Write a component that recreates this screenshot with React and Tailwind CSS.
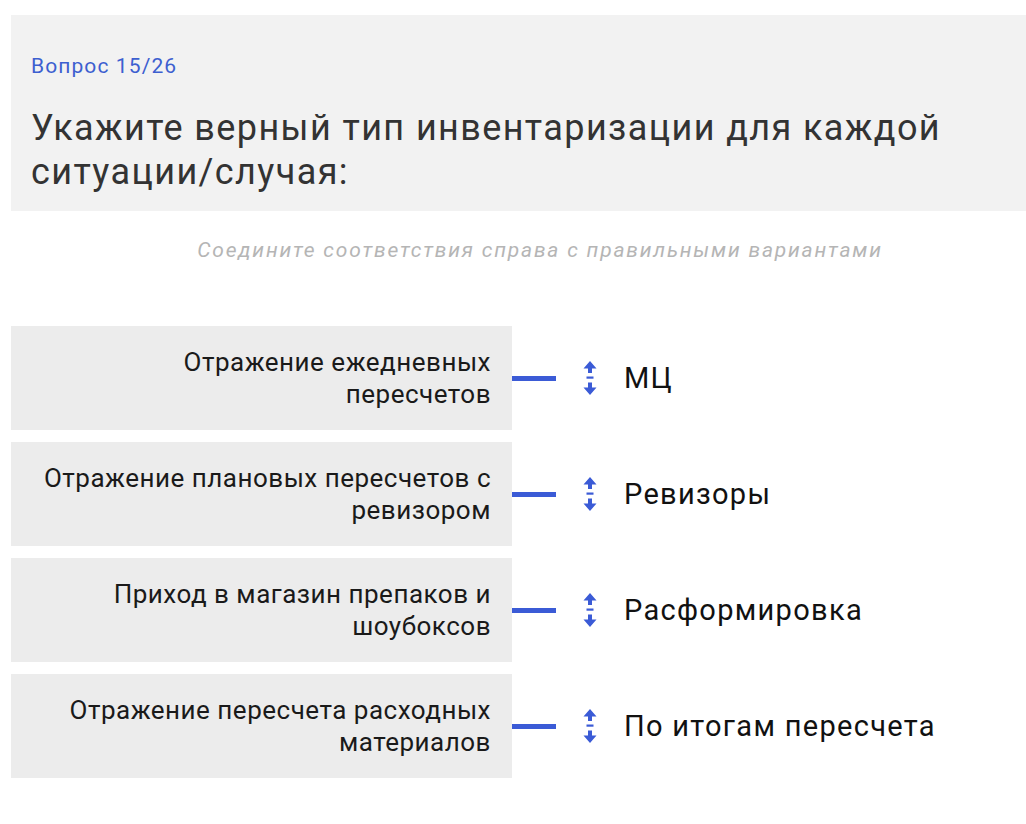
import React from "react";

const pairs = [
  { left: "Отражение ежедневных пересчетов", right: "МЦ" },
  { left: "Отражение плановых пересчетов с ревизором", right: "Ревизоры" },
  { left: "Приход в магазин препаков и шоубоксов", right: "Расформировка" },
  { left: "Отражение пересчета расходных материалов", right: "По итогам пересчета" },
];

function SwapIcon() {
  return (
    <svg width="14" height="34" viewBox="0 0 14 34" fill="#3b5bd6">
      <path d="M7 0 L13.5 7.5 L9 7.5 L9 12 L5 12 L5 7.5 L0.5 7.5 Z" />
      <rect x="3.5" y="15.5" width="7" height="2.2" />
      <path d="M7 34 L13.5 26.5 L9 26.5 L9 21.5 L5 21.5 L5 26.5 L0.5 26.5 Z" />
    </svg>
  );
}

export default function App() {
  return (
    <div
      className="w-[1026px] h-[824px] bg-white overflow-hidden"
      style={{ fontFamily: "Roboto, 'Noto Sans', sans-serif" }}
    >
      {/* question header */}
      <div className="ml-[11px] mt-[15px] h-[196px] bg-[#f2f2f2] pl-[20px] pt-[38px]">
        <div className="text-[21px] leading-[26px] text-[#3d5fd0] tracking-[1.1px]">Вопрос 15/26</div>
        <h1 className="mt-[27px] text-[36px] leading-[44px] text-[#333333] tracking-[1.4px]">
          Укажите верный тип инвентаризации для каждой ситуации/случая:
        </h1>
      </div>

      <p className="mt-[25px] text-center italic text-[21px] leading-[28px] text-[#b5b5b5] tracking-[1.8px] pl-[54px]">
        Соедините соответствия справа с правильными вариантами
      </p>

      {/* matching rows */}
      <div className="mt-[62px] flex flex-col gap-[12px]">
        {pairs.map((p, i) => (
          <div key={i} className="flex items-center">
            <div className="ml-[11px] w-[501px] h-[104px] bg-[#ececec] flex items-center justify-end pl-[28px] pr-[21px]">
              <span className="text-right text-[26px] leading-[32px] text-[#1a1a1a] tracking-[0.5px]">{p.left}</span>
            </div>
            <div className="w-[44px] h-[5px] bg-[#3b5bd6]"></div>
            <div className="ml-[27px]">
              <SwapIcon />
            </div>
            <div className="ml-[27px] text-[29px] leading-[34px] text-[#111111] tracking-[1.3px]">{p.right}</div>
          </div>
        ))}
      </div>
    </div>
  );
}
